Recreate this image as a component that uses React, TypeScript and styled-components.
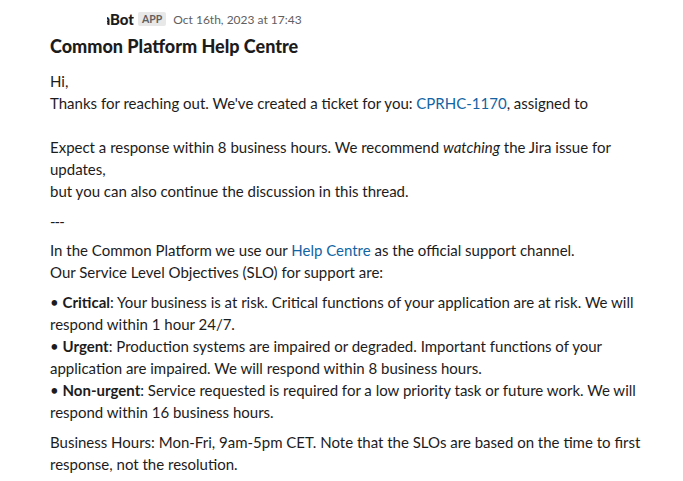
import styled, { createGlobalStyle } from "styled-components";

const GlobalStyle = createGlobalStyle`
  body {
    margin: 0;
    background: #ffffff;
    font-family: Lato, "Noto Sans", sans-serif;
    color: #1d1c1d;
  }
`;

const Message = styled.div`
  padding: 8px 20px 0 50px;
`;

const Header = styled.div`
  display: flex;
  align-items: center;
  height: 22px;
`;

const NameClip = styled.div`
  width: 27px;
  margin-left: 57px;
  overflow: hidden;
  display: flex;
  justify-content: flex-end;
`;

const Name = styled.span`
  font-weight: 900;
  font-size: 15px;
  white-space: nowrap;
`;

const Badge = styled.span`
  margin-left: 4px;
  background: #e8e8e8;
  color: #616061;
  font-size: 10.5px;
  font-weight: 700;
  padding: 1px 4px;
  border-radius: 2px;
  line-height: 12px;
`;

const Time = styled.span`
  margin-left: 7px;
  font-size: 12px;
  color: #616061;
`;

const Title = styled.h1`
  margin: 3px 0 11px;
  font-size: 18px;
  font-weight: 900;
  line-height: 26px;
`;

const Para = styled.p`
  margin: 0;
  font-size: 15px;
  line-height: 22px;
`;

const Block = styled.div<{ $gap?: number }>`
  margin-top: ${(p) => p.$gap ?? 0}px;
`;

const Link = styled.a`
  color: #1264a3;
  text-decoration: none;
`;

const Divider = styled.p`
  margin: 8px 0 0;
  font-size: 15px;
  line-height: 22px;
  letter-spacing: -1px;
`;

export default function App() {
  return (
    <>
      <GlobalStyle />
      <Message>
        <Header>
          <NameClip>
            <Name>JiraBot</Name>
          </NameClip>
          <Badge>APP</Badge>
          <Time>Oct 16th, 2023 at 17:43</Time>
        </Header>
        <Title>Common Platform Help Centre</Title>
        <Para>Hi,</Para>
        <Para>
          Thanks for reaching out. We've created a ticket for you:{" "}
          <Link href="#">CPRHC-1170</Link>, assigned to
        </Para>
        <Para>&nbsp;</Para>
        <Para>
          Expect a response within 8 business hours. We recommend{" "}
          <em>watching</em> the Jira issue for
          <br />
          updates,
          <br />
          but you can also continue the discussion in this thread.
        </Para>
        <Divider>---</Divider>
        <Block $gap={7}>
          <Para>
            In the Common Platform we use our <Link href="#">Help Centre</Link>{" "}
            as the official support channel.
            <br />
            Our Service Level Objectives (SLO) for support are:
          </Para>
        </Block>
        <Block $gap={8}>
          <Para>
            • <strong>Critical</strong>: Your business is at risk. Critical
            functions of your application are at risk. We will
            <br />
            respond within 1 hour 24/7.
            <br />• <strong>Urgent</strong>: Production systems are impaired or
            degraded. Important functions of your
            <br />
            application are impaired. We will respond within 8 business hours.
            <br />• <strong>Non-urgent</strong>: Service requested is required
            for a low priority task or future work. We will
            <br />
            respond within 16 business hours.
          </Para>
        </Block>
        <Block $gap={8}>
          <Para>
            Business Hours: Mon-Fri, 9am-5pm CET. Note that the SLOs are based
            on the time to first
            <br />
            response, not the resolution.
          </Para>
        </Block>
      </Message>
    </>
  );
}
